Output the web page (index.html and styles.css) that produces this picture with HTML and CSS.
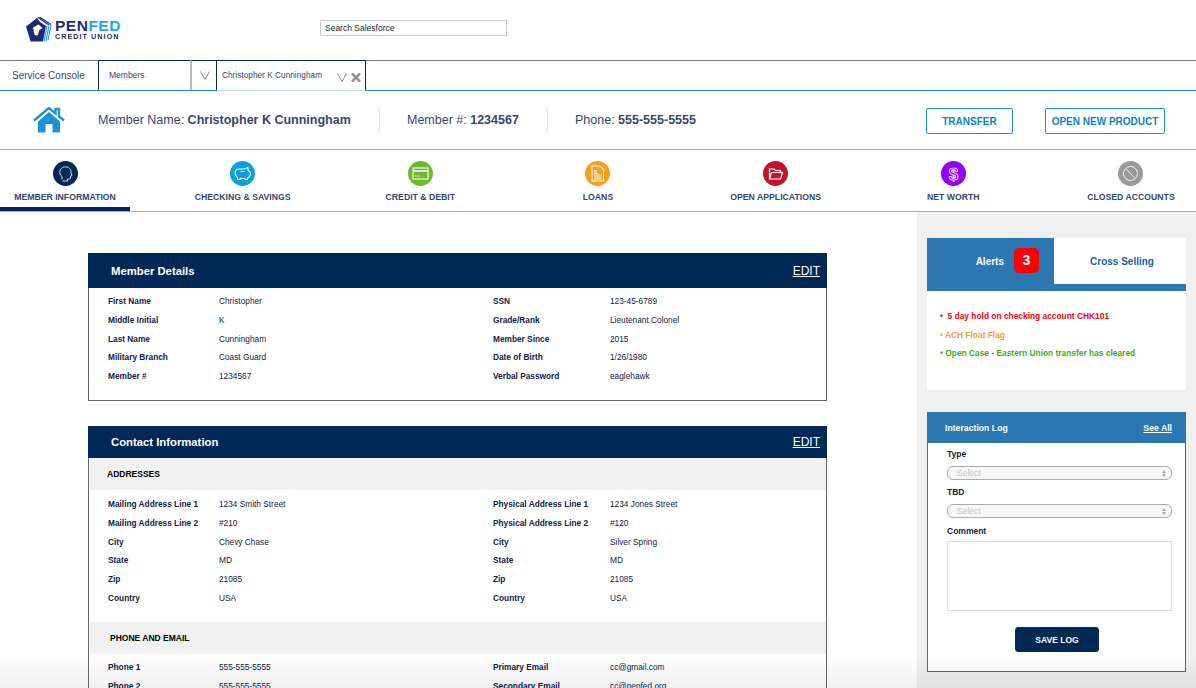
FILE: index.html
```html
<!DOCTYPE html>
<html lang="en">
<head>
  <meta charset="UTF-8">
  <title>Member Information</title>
  <link rel="stylesheet" href="styles.css">
</head>
<body>
<header class="topbar">
  <div class="logo">
    <svg class="logo-mark" viewBox="0 0 26 25" width="26" height="25">
      <path d="M0 9.500 L11 1 L14 5 L20 9 L17 24.500 L4.500 24.500 Z" fill="#1f2a72"/>
      <path d="M7 10.500 L12.500 7.500 L16.500 11 L13.500 13 L11.500 18.500 L8.500 18 Z" fill="#fff"/>
      <path d="M12 .5 L23 8 M13.500 0 L25 7.500" stroke="#1f2a72" stroke-width="1.100" fill="none"/>
      <path d="M21 9 L18 24.500 M23 8.500 L20 24 M25 8 L22 23" stroke="#1aa7ec" stroke-width="1.200" fill="none"/>
    </svg>
    <div class="logo-text">
      <div class="logo-name">PEN<span>FED</span></div>
      <div class="logo-sub">CREDIT UNION</div>
    </div>
  </div>
  <input class="search" type="text" placeholder="Search Salesforce">
</header>

<div class="tabs">
  <div class="tab-app">Service Console</div>
  <div class="tab-list">Members</div>
  <div class="tab-menu">
    <svg width="10" height="9" viewBox="0 0 10 9"><path d="M.5 .5 L5 8.500 L9.500 .5" fill="none" stroke="#888" stroke-width="1"/></svg>
  </div>
  <div class="tab-active">
    <span class="tab-name">Christopher K Cunningham</span>
    <svg width="10" height="9" viewBox="0 0 10 9"><path d="M.5 .5 L5 8.500 L9.500 .5" fill="none" stroke="#888" stroke-width="1"/></svg>
    <svg class="tab-close" width="10" height="9" viewBox="0 0 10 9"><path d="M1 .5 L9 8.500 M9 .5 L1 8.500" fill="none" stroke="#8a8a8a" stroke-width="2.400"/></svg>
  </div>
</div>

<div class="member-bar">
  <svg class="home" width="32" height="26" viewBox="0 0 32 26">
    <path d="M1 13.500 L16 1 L22.500 6.500 V2 H26 V9.500 L31 13.500" fill="none" stroke="#1a94d8" stroke-width="2.400"/>
    <path d="M5 14.500 L16 5 L27 14.500 V25.500 H19.500 V17 H12.500 V25.500 H5 Z" fill="#1a94d8"/>
  </svg>
  <div class="member-fact fact-name">Member Name: <b>Christopher K Cunningham</b></div>
  <div class="member-fact fact-number">Member #: <b>1234567</b></div>
  <div class="member-fact fact-phone">Phone: <b>555-555-5555</b></div>
  <button class="btn btn-transfer">TRANSFER</button>
  <button class="btn btn-open">OPEN NEW PRODUCT</button>
</div>

<nav class="nav">
  <a class="nav-item active">
    <span class="nav-icon navy"><svg viewBox="0 0 25 25" width="25" height="25"><path d="M9 18.500 V15.500 C7 14 6.500 12 7 10 C8 6.500 11 5.500 13.500 6 C17 6.500 18.500 9.500 18 12 L19 14.500 L17.500 15 V17 C17.500 18 16 18.300 14.500 18 V20 H9.500" fill="none" stroke="#d9e2ee" stroke-width="1"/></svg></span>
    MEMBER INFORMATION
  </a>
  <a class="nav-item">
    <span class="nav-icon sky"><svg viewBox="0 0 25 25" width="25" height="25"><path d="M5 12 C5 9 8 8 10 8 L14 8 L18 6.500 V9.500 C19.500 10 20 11 20.500 12 C20.500 14.500 19.500 16 17.500 17 V18.500 H15 V17.500 H10 V18.500 H7.500 V16.500 C6 15.500 5.500 14 5 12 Z" fill="none" stroke="#fff" stroke-width="1.100"/><path d="M10.500 10.500 H14.500" stroke="#fff"/></svg></span>
    CHECKING &amp; SAVINGS
  </a>
  <a class="nav-item">
    <span class="nav-icon green"><svg viewBox="0 0 25 25" width="25" height="25"><rect x="5" y="7" width="15" height="11" fill="none" stroke="#fff" stroke-width="1.100"/><path d="M5 10 H20" stroke="#fff" stroke-width="1.500"/><path d="M7 15 H9 M10 15 H12" stroke="#fff"/></svg></span>
    CREDIT &amp; DEBIT
  </a>
  <a class="nav-item">
    <span class="nav-icon orange"><svg viewBox="0 0 25 25" width="25" height="25"><path d="M7 5 H15 L18.500 8.500 V20 H7 Z" fill="none" stroke="#fff" stroke-width="1.100"/><path d="M9 14 H16.500 M9 16 H16.500 M9 18 H16.500" stroke="#fff" stroke-width=".9"/><text class="icon-dollar" x="9" y="12.500">$</text></svg></span>
    LOANS
  </a>
  <a class="nav-item">
    <span class="nav-icon red"><svg viewBox="0 0 25 25" width="25" height="25"><path d="M6.500 18 V8 H11 L12.500 9.500 H17.500 V11.500" fill="none" stroke="#fff" stroke-width="1.200"/><path d="M6.500 18 L8.500 11.500 H19.500 L17.500 18 Z" fill="none" stroke="#fff" stroke-width="1.200"/></svg></span>
    OPEN APPLICATIONS
  </a>
  <a class="nav-item">
    <span class="nav-icon purple"><svg viewBox="0 0 25 25" width="25" height="25"><text class="icon-worth" x="12.500" y="18.500">$</text></svg></span>
    NET WORTH
  </a>
  <a class="nav-item">
    <span class="nav-icon grey"><svg viewBox="0 0 25 25" width="25" height="25"><circle cx="12.500" cy="12.500" r="7" fill="none" stroke="#f2f2f2" stroke-width="1"/><path d="M8 7.500 L17 17.500" stroke="#f2f2f2" stroke-width="1"/></svg></span>
    CLOSED ACCOUNTS
  </a>
</nav>

<div class="page">
  <main class="content">
    <section class="card">
      <div class="card-head"><h2>Member Details</h2><a class="edit">EDIT</a></div>
      <div class="fields fields-details">
        <b>First Name</b><span>Christopher</span><b>SSN</b><span>123-45-6789</span>
        <b>Middle Initial</b><span>K</span><b>Grade/Rank</b><span>Lieutenant Colonel</span>
        <b>Last Name</b><span>Cunningham</span><b>Member Since</b><span>2015</span>
        <b>Military Branch</b><span>Coast Guard</span><b>Date of Birth</b><span>1/26/1980</span>
        <b>Member #</b><span>1234567</span><b>Verbal Password</b><span>eaglehawk</span>
      </div>
    </section>

    <section class="card">
      <div class="card-head card-head-short"><h2>Contact Information</h2><a class="edit">EDIT</a></div>
      <h3 class="band">ADDRESSES</h3>
      <div class="fields fields-address">
        <b>Mailing Address Line 1</b><span>1234 Smith Street</span><b>Physical Address Line 1</b><span>1234 Jones Street</span>
        <b>Mailing Address Line 2</b><span>#210</span><b>Physical Address Line 2</b><span>#120</span>
        <b>City</b><span>Chevy Chase</span><b>City</b><span>Silver Spring</span>
        <b>State</b><span>MD</span><b>State</b><span>MD</span>
        <b>Zip</b><span>21085</span><b>Zip</b><span>21085</span>
        <b>Country</b><span>USA</span><b>Country</b><span>USA</span>
      </div>
      <h3 class="band band-phone">PHONE AND EMAIL</h3>
      <div class="fields fields-phone">
        <b>Phone 1</b><span>555-555-5555</span><b>Primary Email</b><span>cc@gmail.com</span>
        <b>Phone 2</b><span>555-555-5555</span><b>Secondary Email</b><span>cc@penfed.org</span>
      </div>
    </section>
  </main>

  <aside class="side">
    <div class="alerts">
      <div class="alert-tabs">
        <div class="alert-tab on">Alerts <span class="badge">3</span></div>
        <div class="alert-tab">Cross Selling</div>
      </div>
      <ul class="alert-list">
        <li class="alert-red">•&nbsp; 5 day hold on checking account CHK101</li>
        <li class="alert-orange">• ACH Float Flag</li>
        <li class="alert-green">• Open Case - Eastern Union transfer has cleared</li>
      </ul>
    </div>

    <div class="log">
      <div class="log-head"><span>Interaction Log</span><a>See All</a></div>
      <form class="log-form">
        <label>Type</label>
        <div class="select">Select<i class="arrows"></i></div>
        <label>TBD</label>
        <div class="select">Select<i class="arrows"></i></div>
        <label class="label-comment">Comment</label>
        <textarea></textarea>
        <button class="save" type="button">SAVE LOG</button>
      </form>
    </div>
  </aside>
</div>

<div class="fade"></div>
</body>
</html>
```

FILE: styles.css
```css
:root {
  --navy: #002856;
  --blue: #2a77b2;
  --sky: #1a94d8;
  --ink: #35466f;
  --dark-ink: #0f2149;
}
* { box-sizing: border-box; margin: 0; padding: 0; }
html, body { height: 688px; overflow: hidden; }
body { font-family: "Liberation Sans", Arial, sans-serif; color: var(--dark-ink); background: #fff; }

/* top bar */
.topbar { height: 60px; display: flex; align-items: flex-start; padding-left: 26px; }
.logo { display: flex; width: 294px; padding-top: 17px; }
.logo-mark { flex: none; }
.logo-text { margin-left: 3px; margin-top: 3px; }
.logo-name { font-size: 15.500px; line-height: 12px; font-weight: bold; letter-spacing: .5px; color: #1f2a72; }
.logo-name span { color: #1aa7ec; }
.logo-sub { font-size: 7.200px; line-height: 8px; margin-top: 1px; font-weight: bold; letter-spacing: 1.050px; color: #1f2a72; }
.search { margin-top: 20px; width: 187px; height: 16px; border: 1px solid #ccc; padding-left: 4px; font: 8.500px "Liberation Sans", Arial, sans-serif; outline: none; }
.search::placeholder { color: #222; opacity: 1; }

/* console tabs */
.tabs { height: 31px; display: flex; border-top: 1px solid #777; border-bottom: 1px solid var(--sky); color: var(--ink); }
.tab-app { width: 98px; padding-left: 12px; font-size: 10px; line-height: 30px; }
.tab-list { width: 92px; margin-top: -1px; border-top: 1px solid var(--navy); border-left: 1px solid var(--navy); padding-left: 10px; font-size: 8.500px; line-height: 28px; }
.tab-menu { width: 26px; margin-top: -1px; border-top: 1px solid var(--navy); border-left: 2px solid #bbb; padding: 10px 0 0 8px; line-height: 0; }
.tab-active { width: 150px; margin-top: -1px; margin-bottom: -1px; display: flex; align-items: flex-start; border: 1px solid var(--navy); border-bottom: 1px solid #bcdfee; background: #fff; padding-left: 5px; font-size: 8.300px; }
.tab-name { width: 115px; line-height: 28px; }
.tab-active svg { margin-top: 12px; }
.tab-close { margin-left: 4px; }

/* member strip */
.member-bar { height: 59px; display: flex; align-items: center; padding-left: 33px; border-bottom: 1px solid #aaa; color: var(--ink); }
.home { margin-right: 33px; flex: none; }
.member-fact { font-size: 12.500px; white-space: nowrap; }
.fact-name { width: 282px; border-right: 1px solid #e4e4e4; line-height: 26px; }
.fact-number { margin-left: 27px; width: 141px; border-right: 1px solid #e4e4e4; line-height: 26px; }
.fact-phone { margin-left: 27px; width: 351px; }
.btn { height: 26px; margin-top: 2px; border: 1.500px solid #1f8fc4; border-radius: 2px; background: #fff; color: #0c84c0; font: bold 10px "Liberation Sans", Arial, sans-serif; }
.btn-transfer { width: 87px; }
.btn-open { width: 120px; margin-left: 32px; }

/* section nav */
.nav { height: 62px; display: flex; justify-content: space-between; border-bottom: 1px solid #aaa; }
.nav-item { width: 130px; height: 61px; display: flex; flex-direction: column; align-items: center; padding-top: 11px; font-size: 8.700px; font-weight: bold; color: var(--ink); white-space: nowrap; }
.nav-item.active { border-bottom: 4px solid var(--navy); }
.nav-icon { width: 25px; height: 25px; border-radius: 50%; margin-bottom: 6px; line-height: 0; }
.navy { background: var(--navy); }
.sky { background: #0c9ee0; }
.green { background: #6cb92d; }
.orange { background: #f6a01e; }
.red { background: #c2132a; }
.purple { background: #8f00ff; }
.grey { background: #999; }
.icon-dollar { font: bold 6px "Liberation Sans", Arial, sans-serif; fill: #fff; }
.icon-worth { font: bold 17px "Liberation Sans", Arial, sans-serif; text-anchor: middle; fill: none; stroke: #fff; stroke-width: .7; }

/* page body */
.page { display: flex; height: 476px; }
.content { width: 917px; padding: 41px 0 0 88px; }
.card { width: 739px; border: 1px solid #666; border-top: 0; margin-bottom: 25px; }
.card-head { height: 35px; background: var(--navy); color: #fff; display: flex; align-items: center; justify-content: space-between; padding: 0 7px 0 23px; margin: 0 -1px; }
.card-head-short { height: 32px; }
.card-head h2 { font-size: 11.300px; }
.edit { font-size: 12px; text-decoration: underline; }
.fields { display: grid; grid-template-columns: 111px 274px 117px 1fr; grid-auto-rows: 18.700px; align-items: center; padding-left: 19px; font-size: 8.300px; }
.fields b { font-weight: bold; }
.fields-details { padding-top: 4px; padding-bottom: 14.500px; }
.fields-address { padding-top: 5px; padding-bottom: 15px; }
.fields-phone { padding-top: 4px; }
.band { height: 32px; line-height: 32px; margin-left: 1px; padding-left: 17px; background: #f1f1f1; color: #000; font-size: 8.500px; }
.band-phone { padding-left: 20px; }

/* right column */
.side { width: 279px; background: #f0f0f0; padding: 26px 10px 0; }
.alerts { height: 152px; background: #fff; }
.alert-tabs { display: flex; height: 53px; border-bottom: 7px solid var(--blue); }
.alert-tab { width: 128px; height: 45px; background: #fff; color: #1a5fa0; margin-left: 4px; text-align: center; font-size: 10px; font-weight: bold; line-height: 47px; }
.alert-tab.on { width: 127px; height: 53px; margin-left: 0; background: var(--blue); color: #fff; display: flex; justify-content: flex-end; padding-right: 15px; gap: 10px; }
.badge { width: 25px; height: 25px; margin-top: 10px; background: #fb0007; border-radius: 5px; font-size: 14px; line-height: 25px; }
.alert-list { list-style: none; padding: 16px 0 0 13px; font-size: 8.400px; font-weight: bold; }
.alert-list li { height: 18.700px; line-height: 18.700px; }
.alert-red { color: #f5000a; }
.alert-orange { color: #f6992f; }
.alert-green { color: #3fae16; }

.log { margin-top: 22px; height: 260px; background: #fff; border: 1px solid #666; border-top: 0; }
.log-head { height: 31px; margin: 0 -1px; background: var(--blue); color: #fff; font-size: 8.700px; font-weight: bold; display: flex; align-items: center; justify-content: space-between; padding: 0 14px 0 18px; }
.log-head a { text-decoration: underline; }
.log-form { display: flex; flex-direction: column; padding: 5px 13px 0 19px; }
.log-form label { font-size: 8.500px; font-weight: bold; line-height: 12px; margin-bottom: 6px; }
.log-form .label-comment { margin-top: 1px; margin-bottom: 4px; }
.select { position: relative; height: 14px; border: 1px solid #aaa; border-radius: 6px; background: #f7f7f7; color: #c4c4c4; font-size: 8.500px; line-height: 12px; padding-left: 9px; margin-bottom: 6px; }
.arrows { position: absolute; right: 5px; top: 3px; }
.arrows::before, .arrows::after { content: ""; display: block; border-left: 2px solid transparent; border-right: 2px solid transparent; }
.arrows::before { border-bottom: 3px solid #aaa; margin-bottom: 1px; }
.arrows::after { border-top: 3px solid #aaa; }
.log-form textarea { height: 70px; border: 1px solid #ddd; resize: none; }
.save { align-self: center; width: 84px; height: 25px; margin: 16px 5px 0 0; border: 1px solid #0c2c55; border-radius: 3px; background: var(--navy); color: #fff; font: bold 8.500px "Liberation Sans", Arial, sans-serif; }

/* soft shadow along the bottom edge of the capture */
.fade { position: fixed; left: 0; right: 0; bottom: 0; height: 34px; background: linear-gradient(rgba(0,0,0,0), rgba(0,0,0,.06)); pointer-events: none; }
```
